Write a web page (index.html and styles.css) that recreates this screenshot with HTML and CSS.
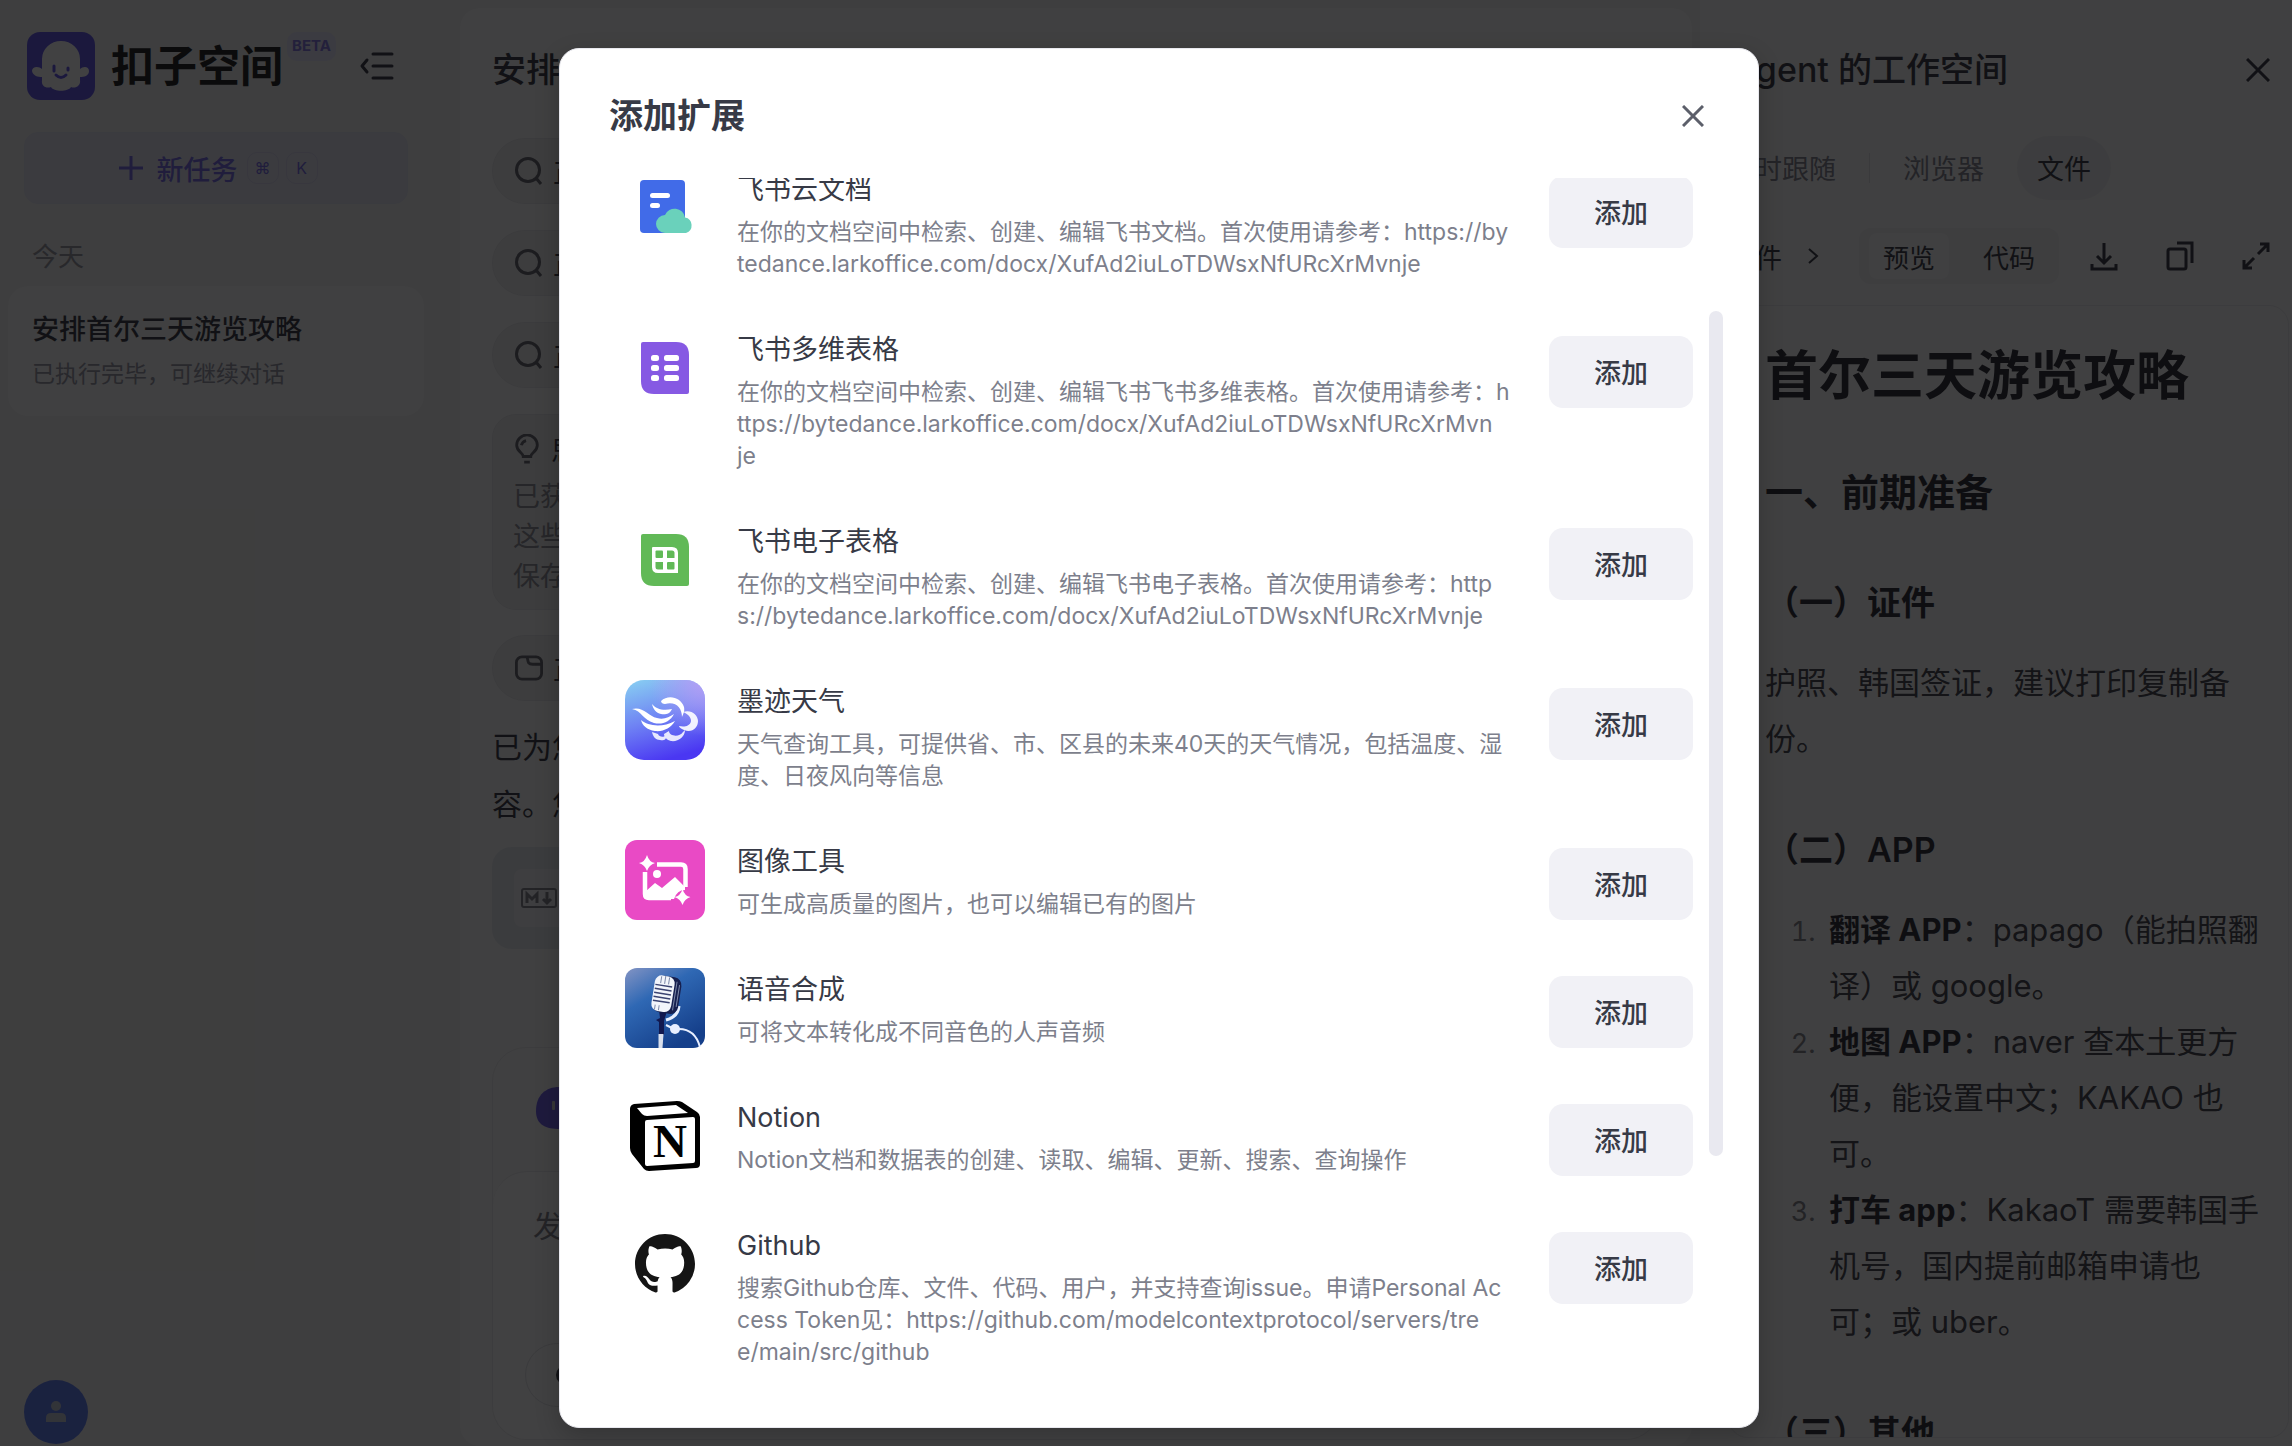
FILE: index.html
```html
<!DOCTYPE html>
<html lang="zh-CN">
<head>
<meta charset="utf-8">
<title>扣子空间</title>
<link rel="stylesheet" href="styles.css">
</head>
<body>
<div class="app">
  <aside class="sidebar">
    <div class="brand">
      <svg class="brand-logo" viewBox="0 0 68 68" aria-hidden="true"><rect width="68" height="68" rx="13" fill="#4d41e6"/><path fill="#fff" d="M15 27a19 18 0 0 1 38 0v10c3-3 9-3 9 2 0 5-5 6-9 6v3c1 6-5 9-9 7-3 5-17 5-20 0-5 2-10-1-9-7v-3c-4 0-9-1-10-6 0-5 7-5 10-2z"/><path d="M27 34v5M41 36v2M29 43q5 5 10 0" fill="none" stroke="#4d41e6" stroke-width="3" stroke-linecap="round"/></svg>
      <strong class="brand-name">扣子空间</strong>
      <span class="beta">BETA</span>
      <button class="icon-button collapse" aria-label="收起"><svg width="34" height="28" viewBox="0 0 34 28"><path d="M13 2h19M13 14h19M13 26h19M7 8l-5 6 5 6" fill="none" stroke="currentColor" stroke-width="3" stroke-linecap="round" stroke-linejoin="round"/></svg></button>
    </div>
    <button class="new-task"><svg width="26" height="26" viewBox="0 0 26 26"><path d="M13 1v24M1 13h24" stroke="currentColor" stroke-width="3"/></svg><span>新任务</span><kbd>⌘</kbd><kbd>K</kbd></button>
    <h2 class="group-label">今天</h2>
    <a class="task" href="#task"><span class="task-title">安排首尔三天游览攻略</span><span class="task-state">已执行完毕，可继续对话</span></a>
    <button class="avatar" aria-label="账户"><svg width="20" height="22" viewBox="0 0 20 22"><circle cx="10" cy="5" r="5" fill="#b9bfd0"/><path d="M0 21v-4q0-5 5-5h10q5 0 5 5v4z" fill="#b9bfd0"/></svg></button>
  </aside>

  <main class="chat">
    <h1 class="chat-title">安排首尔三天游览攻略</h1>
    <div class="step"><svg class="step-icon" viewBox="0 0 28 28"><circle cx="13" cy="13" r="11.500"/><path d="M21 21l5 6"/></svg>正在搜索</div>
    <div class="step"><svg class="step-icon" viewBox="0 0 28 28"><circle cx="13" cy="13" r="11.500"/><path d="M21 21l5 6"/></svg>正在搜索</div>
    <div class="step"><svg class="step-icon" viewBox="0 0 28 28"><circle cx="13" cy="13" r="11.500"/><path d="M21 21l5 6"/></svg>正在搜索</div>
    <section class="thought">
      <div class="thought-head"><svg class="step-icon" viewBox="0 0 28 32"><path d="M10 24c0-4-7-5-7-12a11 11 0 0 1 22 0c0 7-7 8-7 12zM11 30h6M8 12q1-4 5-5"/></svg>思考</div>
      <p>已获取攻略<br>这些信息<br>保存文件</p>
    </section>
    <div class="step"><svg class="step-icon" viewBox="0 0 30 28"><rect x="1.500" y="2" width="27" height="24" rx="6"/><path d="M13 2c1 6 1 8 6 8h9"/></svg>正在保存</div>
    <p class="answer">已为您整理内<br>容。您可查看</p>
    <div class="file-card"><div class="file-tile"><svg width="36" height="20" viewBox="0 0 36 20" fill="none" stroke="currentColor" stroke-width="2"><rect x="1" y="1" width="34" height="18" rx="2"/><path stroke-width="3" d="M6 15V6l5 5 5-5v9M26 4v10M22 11l4 4 4-4"/></svg></div></div>
    <section class="composer">
      <div class="composer-head"><svg width="48" height="42" viewBox="0 0 48 42"><path d="M0 24C0 8 10 0 23 0s25 8 25 22-10 20-24 20S0 38 0 24z" fill="#5a46e8"/><rect x="16" y="14" width="3" height="9" rx="1" fill="#ccc"/></svg></div>
      <div class="composer-body">
        <textarea aria-label="消息" placeholder="发送消息"></textarea>
        <button class="round-button" aria-label="扩展"><svg width="20" height="20" viewBox="0 0 20 20"><circle cx="10" cy="10" r="8" fill="none" stroke="currentColor" stroke-width="4"/></svg></button>
      </div>
    </section>
  </main>

  <section class="workspace">
    <header class="workspace-head"><h2>Agent 的工作空间</h2><button class="icon-button" aria-label="关闭"><svg width="24" height="24" viewBox="0 0 24 24"><path d="M1 1l22 22M23 1L1 23" stroke="currentColor" stroke-width="3"/></svg></button></header>
    <nav class="tabs"><button>实时跟随</button><i></i><button>浏览器</button><button class="active">文件</button></nav>
    <div class="toolbar">
      <span class="crumb">文件</span>
      <svg class="chevron" width="12" height="18" viewBox="0 0 12 18"><path d="M2 2l8 7-8 7" fill="none" stroke="currentColor" stroke-width="2"/></svg>
      <div class="segment"><button class="active">预览</button><button>代码</button></div>
      <div class="tools">
        <button class="icon-button" aria-label="下载"><svg width="28" height="30" viewBox="0 0 28 30"><path d="M14 2v20M7 15l7 7 7-7M2 23v5h24v-5"/></svg></button>
        <button class="icon-button" aria-label="复制"><svg width="28" height="30" viewBox="0 0 28 30"><rect x="2" y="8" width="18" height="20" rx="2"/><path d="M11 2h15v20"/></svg></button>
        <button class="icon-button" aria-label="展开"><svg width="28" height="30" viewBox="0 0 28 30"><path d="M16 13L26 3M18 3h8v8M12 17L2 27M2 19v8h8"/></svg></button>
      </div>
    </div>
    <article class="doc">
      <h1>首尔三天游览攻略</h1>
      <h2>一、前期准备</h2>
      <h3>（一）证件</h3>
      <p>护照、韩国签证，建议打印复制备份。</p>
      <h3>（二）APP</h3>
      <ol>
        <li><strong>翻译 APP</strong>：papago（能拍照翻译）或 google。</li>
        <li><strong>地图 APP</strong>：naver 查本土更方便，能设置中文；KAKAO 也可。</li>
        <li><strong>打车 app</strong>：KakaoT 需要韩国手机号，国内提前邮箱申请也可；或 uber。</li>
      </ol>
      <h3>（三）其他</h3>
    </article>
  </section>
</div>

<div class="overlay">
  <section class="modal" role="dialog" aria-modal="true" aria-labelledby="modal-title">
    <header class="modal-head"><h2 id="modal-title">添加扩展</h2><button class="icon-button" aria-label="关闭"><svg width="22" height="22" viewBox="0 0 22 22"><path d="M1 1l20 20M21 1L1 21" stroke="currentColor" stroke-width="3"/></svg></button></header>
    <div class="modal-scroll">
      <ul class="extensions">
        <li>
          <svg class="ext-icon" viewBox="0 0 80 80"><rect x="15" y="12" width="45" height="53" rx="4" fill="#416be8"/><rect x="25" y="25" width="20" height="5" rx="2.500" fill="#fff"/><rect x="25" y="35" width="10" height="5" rx="2.500" fill="#fff"/><path d="M40 65a9 9 0 0 1 0-18 10.500 10.500 0 0 1 20 2.500 8 8 0 0 1 1 15.500z" fill="#6ad1bb"/></svg>
          <div class="ext-text"><h3>飞书云文档</h3><p>在你的文档空间中检索、创建、编辑飞书文档。首次使用请参考：https://by<br>tedance.larkoffice.com/docx/XufAd2iuLoTDWsxNfURcXrMvnje</p></div>
          <button class="add">添加</button>
        </li>
        <li>
          <svg class="ext-icon" viewBox="0 0 80 80"><path d="M18 14h33q13 0 13 13v37q0 2-2 2H29q-13 0-13-13V16q0-2 2-2z" fill="#8659e3"/><g fill="#fff"><rect x="26" y="27" width="8" height="6" rx="2.500"/><rect x="39" y="27" width="15" height="6" rx="2.500"/><rect x="26" y="37" width="8" height="6" rx="2.500"/><rect x="39" y="37" width="15" height="6" rx="2.500"/><rect x="26" y="47" width="8" height="6" rx="2.500"/><rect x="39" y="47" width="15" height="6" rx="2.500"/></g></svg>
          <div class="ext-text"><h3>飞书多维表格</h3><p>在你的文档空间中检索、创建、编辑飞书飞书多维表格。首次使用请参考：h<br>ttps://bytedance.larkoffice.com/docx/XufAd2iuLoTDWsxNfURcXrMvn<br>je</p></div>
          <button class="add">添加</button>
        </li>
        <li>
          <svg class="ext-icon" viewBox="0 0 80 80"><path d="M18 14h33q13 0 13 13v37q0 2-2 2H29q-13 0-13-13V16q0-2 2-2z" fill="#61b957"/><path d="M28 27h19q6 0 6 6v20H33q-6 0-6-6V28q0-1 1-1z" fill="#fff"/><g fill="#61b957"><rect x="30.500" y="30.500" width="7.500" height="7.500" rx="1"/><path d="M42 30.500h5q2.500 0 2.500 2.500v5H42z"/><path d="M30.500 42H38v7.500h-5q-2.500 0-2.500-2.500z"/><rect x="42" y="42" width="7.500" height="7.500" rx="1"/></g></svg>
          <div class="ext-text"><h3>飞书电子表格</h3><p>在你的文档空间中检索、创建、编辑飞书电子表格。首次使用请参考：http<br>s://bytedance.larkoffice.com/docx/XufAd2iuLoTDWsxNfURcXrMvnje</p></div>
          <button class="add">添加</button>
        </li>
        <li>
          <svg class="ext-icon" viewBox="0 0 80 80"><defs><linearGradient id="sky" x1=".2" y1="0" x2=".5" y2="1"><stop offset="0" stop-color="#86c9f2"/><stop offset=".5" stop-color="#6f83f4"/><stop offset="1" stop-color="#4a37f2"/></linearGradient><radialGradient id="haze" cx="1" cy="0" r=".7"><stop offset="0" stop-color="#b69df5"/><stop offset="1" stop-color="#b69df5" stop-opacity="0"/></radialGradient></defs><rect width="80" height="80" rx="19" fill="url(#sky)"/><rect width="80" height="80" rx="19" fill="url(#haze)"/><g fill="#fff"><path d="M7 29c11-3 16 7 25 9 7 2 12-1 17-4-4 8-12 11-20 9C18 40 17 31 7 29z"/><path d="M27 24c4 5 11 7 20 5-2 5-7 6-11 5-5-1-8-5-9-10zM16 40c7 6 21 8 34 1-4 7-12 11-20 10-8-1-13-6-14-11z"/><path d="M36 21c7-7 20-4 23 6 1 5-1 7-2 10 0-9-6-16-17-13-2 0-4-1-4-3z"/><path d="M58 32c8-3 15 3 15 9 0 7-6 12-14 9-3-1-5-3-5-4 4 1 11 1 12-5 0-4-3-7-8-9z" opacity=".9"/><path d="M60 50c0 7-7 12-14 11-4-1-7-4-7-7l5-3c0 5 10 7 14 1zM27 52l6 2c1 3 6 4 8 1 1 5-3 6-6 5-4 0-7-3-8-8z" opacity=".85"/></g></svg>
          <div class="ext-text"><h3>墨迹天气</h3><p>天气查询工具，可提供省、市、区县的未来40天的天气情况，包括温度、湿度、日夜风向等信息</p></div>
          <button class="add">添加</button>
        </li>
        <li>
          <svg class="ext-icon" viewBox="0 0 80 80"><rect width="80" height="80" rx="12" fill="#e94ac5"/><path d="M32 24.500h24q4.500 0 4.500 4.500v18M20 32v22q0 4 4 4h22" fill="none" stroke="#fff" stroke-width="4.500"/><path d="M20 52l10-9 7 5 13-11 10 10v3q-8 0-11 9H24q-4 0-4-4z" fill="#fff"/><circle cx="32" cy="34" r="4" fill="#fff"/><path d="M22 15q2 7 8 8-6 2-8 8-2-6-8-8 6-1 8-8zM57.500 49q2 7 8 8-6 2-8 8-2-6-8-8 6-1 8-8z" fill="#fff"/></svg>
          <div class="ext-text"><h3>图像工具</h3><p>可生成高质量的图片，也可以编辑已有的图片</p></div>
          <button class="add">添加</button>
        </li>
        <li>
          <svg class="ext-icon" viewBox="0 0 80 80"><defs><linearGradient id="studio" x1="0" y1="0" x2=".6" y2="1"><stop offset="0" stop-color="#8394c4"/><stop offset=".4" stop-color="#2f68b4"/><stop offset="1" stop-color="#153f8a"/></linearGradient></defs><rect width="80" height="80" rx="12" fill="url(#studio)"/><path d="M54 38q-1 11-13 14" fill="none" stroke="#e7efff" stroke-width="3"/><path d="M34 42l8 1-3 10v14h-5V54l-3-2 4-2z" fill="#11184f"/><path d="M33.500 66h5l-1 14h-4z" fill="#d9dfec"/><g transform="rotate(9 40 26)"><rect x="29" y="8" width="26" height="37" rx="8" fill="#17204f"/><rect x="28" y="8" width="20" height="36" rx="7" fill="#f2f5fb"/><path d="M29 18h17M29 22h17M29 26h17M29 30h17M29 34h17" stroke="#3a4371" stroke-width="1.500"/><path d="M34 9v7M38 8v8M42 9v7M32 38v5M36 38v5M50 12v29M53 15v22" stroke="#7d89a8" stroke-width="1"/></g><circle cx="50" cy="61" r="5" fill="#e8efff"/><path d="M41 57l8 4M54 61q16 0 21 18" fill="none" stroke="#e8efff" stroke-width="2"/></svg>
          <div class="ext-text"><h3>语音合成</h3><p>可将文本转化成不同音色的人声音频</p></div>
          <button class="add">添加</button>
        </li>
        <li>
          <svg class="ext-icon" viewBox="0 0 80 80"><path d="M9 8l43-3q3 0 5 1l15 10q3 2 3 5v47q0 4-4 4l-47 3q-3 0-5-2L7 58q-2-3-2-6V13q0-4 4-5z" fill="#000"/><path d="M12 12l39-3 12 8-41 3q-3 0-5-2z" fill="#fff"/><path d="M22 24l46-3q2 0 2 2v42q0 2-2 2l-46 3q-2 0-2-2V26q0-2 2-2z" fill="#fff"/><text x="45" y="61" text-anchor="middle" class="notion-letter">N</text></svg>
          <div class="ext-text"><h3>Notion</h3><p>Notion文档和数据表的创建、读取、编辑、更新、搜索、查询操作</p></div>
          <button class="add">添加</button>
        </li>
        <li>
          <svg class="ext-icon" viewBox="0 0 80 80"><path transform="translate(10 10) scale(3.750)" fill="#151515" d="M8 0C3.580 0 0 3.580 0 8c0 3.540 2.290 6.530 5.470 7.590.4.070.55-.17.55-.38 0-.19-.01-.82-.01-1.490-2.010.37-2.530-.49-2.690-.94-.09-.23-.48-.94-.82-1.130-.28-.15-.68-.52-.01-.53.63-.01 1.080.58 1.230.82.72 1.210 1.870.87 2.330.66.070-.52.28-.87.51-1.070-1.780-.2-3.640-.89-3.640-3.950 0-.87.31-1.590.82-2.150-.08-.2-.36-1.020.08-2.120 0 0 .67-.21 2.200.82.64-.18 1.320-.27 2-.27s1.360.09 2 .27c1.530-1.040 2.200-.82 2.200-.82.44 1.100.16 1.920.08 2.120.51.56.82 1.270.82 2.150 0 3.070-1.870 3.750-3.650 3.950.29.25.54.73.54 1.480 0 1.070-.01 1.930-.01 2.200 0 .21.15.46.55.38A8.010 8.010 0 0 0 16 8c0-4.420-3.580-8-8-8z"/></svg>
          <div class="ext-text"><h3>Github</h3><p>搜索Github仓库、文件、代码、用户，并支持查询issue。申请Personal Ac<br>cess Token见：https://github.com/modelcontextprotocol/servers/tre<br>e/main/src/github</p></div>
          <button class="add">添加</button>
        </li>
      </ul>
    </div>
    <div class="scroll-thumb"></div>
  </section>
</div>
</body>
</html>
```
FILE: styles.css
```css
@counter-style steps { system: extends decimal; suffix: ".\2002"; }

* { box-sizing: border-box; }

body, h1, h2, h3, p, ul, ol { margin: 0; padding: 0; }

body {
  height: 100vh;
  overflow: hidden;
  font-family: Inter, "Noto Sans CJK SC", sans-serif;
  font-size: 27px;
  color: #1c1f2a;
  text-spacing-trim: space-all;
}

button, textarea { font: inherit; color: inherit; border: 0; background: none; padding: 0; }
button { cursor: pointer; }
ul { list-style: none; }
svg { display: block; flex: none; }
.icon-button { display: flex; }

.app { display: flex; height: 100vh; background: #efefef; }

/* Sidebar */
.sidebar { width: 460px; flex: none; display: flex; flex-direction: column; padding: 32px 36px 2px 8px; }
.brand { display: flex; height: 68px; margin-left: 19px; align-items: center; }
.brand-logo { width: 68px; height: 68px; }
.brand-name { margin-left: 16px; font-size: 43px; line-height: 68px; font-weight: 700; color: #000; }
.beta { align-self: flex-start; height: 29px; margin-left: 4px; padding: 0 5px; border-radius: 10px; background: #e2e1fa; color: #7266dc; font-size: 15px; line-height: 28px; font-weight: 700; }
.collapse { margin-left: 24px; }
.new-task { display: flex; align-items: center; justify-content: center; height: 72px; margin: 32px 16px 0; padding-left: 10px; border: 1px solid #dfe0ee; border-radius: 14px; background: #e2e4f0; color: #6256e4; font-weight: 500; }
.new-task span { margin: 0 9px 0 13px; }
.new-task kbd { width: 32px; height: 32px; margin-right: 7px; border: 1px solid #d2d0ea; border-radius: 10px; font: 16px/30px Inter, "DejaVu Sans", sans-serif; }
.group-label { margin: 33px 24px 0; font-size: 26px; line-height: 40px; font-weight: 400; color: #8a8a94; }
.task { display: flex; flex-direction: column; height: 130px; margin-top: 9px; padding: 24px; border-radius: 20px; background: #f8f8f8; color: inherit; text-decoration: none; }
.task-title { line-height: 40px; font-weight: 500; white-space: nowrap; }
.task-state { margin-top: 8px; font-size: 23px; line-height: 32px; color: #8a8a98; }
.avatar { display: flex; align-items: center; justify-content: center; width: 64px; height: 64px; margin: auto 0 0 16px; border-radius: 50%; background: #4a6cf0; }

/* Conversation */
.chat { flex: 1; min-width: 0; display: flex; flex-direction: column; align-items: flex-start; margin: 8px 8px 0 0; padding: 36px 32px 6px; border-radius: 20px; background: #f9f9f9; }
.chat-title { margin-bottom: 42px; font-size: 34px; line-height: 52px; font-weight: 500; }
.step { display: flex; align-items: center; gap: 10px; height: 66px; margin-bottom: 26px; padding: 0 22px; border: 1px solid #e4e4e6; border-radius: 33px; background: #ececec; }
.step-icon { width: 28px; height: 30px; fill: none; stroke: #50505a; stroke-width: 3; }
.thought { align-self: stretch; height: 196px; margin-bottom: 25px; padding: 14px 20px; border: 1px solid #e4e4e6; border-radius: 24px; background: #ececec; color: #7e7e88; }
.thought-head { display: flex; align-items: center; gap: 10px; height: 40px; margin-bottom: 8px; color: #1c1f2a; }
.thought p { line-height: 40px; }
.answer { font-size: 30px; line-height: 57px; margin: -8px 0 14px; }
.file-card { align-self: stretch; height: 102px; padding: 22px; border-radius: 20px; background: #e2e6ec; }
.file-tile { display: flex; align-items: center; width: 58px; height: 58px; padding-left: 7px; border-radius: 8px; background: #f2f2f4; color: #70707a; }
.composer { align-self: stretch; flex: 1; display: flex; flex-direction: column; margin-top: 98px; border: 1px solid #e8e8ea; border-radius: 34px; }
.composer-head { height: 123px; padding: 39px 43px; }
.composer-body { flex: 1; display: flex; flex-direction: column; justify-content: space-between; align-items: flex-start; padding: 28px 32px 32px; border-top: 1px solid #e8e8ea; border-radius: 34px; background: #fdfdfd; }
.composer textarea { width: 100%; height: 52px; padding: 0 8px; font-size: 30px; line-height: 52px; resize: none; overflow: hidden; }
.composer textarea::placeholder { color: #73737d; opacity: 1; }
.round-button { display: flex; align-items: center; width: 120px; height: 64px; padding-left: 30px; border: 1px solid #e0e0e4; border-radius: 32px; }

/* Workspace */
.workspace { flex: none; width: 592px; display: flex; flex-direction: column; padding: 44px 3px 8px 28px; background: #f9f9f9; }
.workspace-head { display: flex; justify-content: space-between; align-items: center; margin: 0 19px 0 4px; }
.workspace-head h2 { font-size: 34px; line-height: 52px; font-weight: 500; }
.tabs { display: flex; align-items: center; gap: 13px; margin-top: 40px; margin-left: -20px; color: #74747f; }
.tabs button { height: 64px; padding: 0 20px 2px; border-radius: 32px; }
.tabs i { width: 1px; height: 30px; background: #dcdce0; }
.tabs .active { color: #1c1f2a; background: #ececee; }
.toolbar { display: flex; align-items: center; height: 56px; margin: 28px 19px 21px 0; }
.chevron { margin: 0 40px 0 25px; }
.segment { display: flex; align-items: center; height: 56px; padding: 0 10px; gap: 20px; border-radius: 12px; background: #efeff1; }
.segment button { width: 80px; height: 46px; border-radius: 8px; font-size: 26px; white-space: nowrap; }
.segment .active { background: #f9f9fa; }
.tools { display: flex; flex: 1; justify-content: space-between; margin-left: 31px; }
.tools svg { fill: none; stroke: currentColor; stroke-width: 3; }
.doc { flex: 1; min-height: 0; overflow: hidden; padding: 30px 26px 0 36px; border: 1px solid #e6e6ea; border-radius: 20px; background: #fafafa; color: #2c2c34; font-size: 31px; line-height: 56px; }
.doc h1 { font-size: 53px; line-height: 80px; font-weight: 700; color: #12121a; white-space: nowrap; }
.doc h2 { margin-top: 48px; font-size: 38px; line-height: 56px; font-weight: 700; color: #12121a; }
.doc h3 { margin: 55px 0 24px; font-size: 34px; line-height: 56px; font-weight: 600; color: #12121a; }
.doc ol { padding-left: 64px; list-style: steps; }
.doc li::marker { color: #707078; font-size: 27px; }
.doc strong { font-weight: 700; color: #12121a; }

/* Dialog */
.overlay { position: absolute; inset: 0; display: flex; justify-content: center; padding: 48px 0 18px 26px; background: rgba(14, 14, 15, .79); }
.modal { position: relative; display: flex; flex-direction: column; width: 1200px; border: 1px solid #e8e8ee; border-radius: 20px; background: #fff; box-shadow: 0 8px 24px rgba(0, 0, 0, .2); }
.modal-head { display: flex; justify-content: space-between; align-items: center; height: 129px; padding: 4px 54px 0 49px; color: #5c5f6a; }
.modal-head h2 { font-size: 34px; line-height: 52px; font-weight: 600; color: #373a46; }
.modal-scroll { flex: 1; min-height: 0; overflow: hidden; padding: 0 65px; }
.extensions { margin-top: -10px; }
.extensions li { display: flex; align-items: flex-start; padding-bottom: 48px; }
.ext-icon { width: 80px; height: 80px; }
.ext-text { flex: 1; min-width: 0; margin: 0 36px 0 32px; }
.ext-text h3 { margin-bottom: 4px; font-size: 27px; line-height: 44px; font-weight: 400; color: #373a46; }
.ext-text p { font-size: 23px; line-height: 32px; color: #7d7f8c; word-break: break-all; }
.add { width: 144px; height: 72px; margin-top: 8px; padding-bottom: 2px; border-radius: 14px; background: #f1f1f6; color: #373a46; font-weight: 500; }
.notion-letter { font: 700 47px "Liberation Serif", serif; }
.scroll-thumb { position: absolute; top: 262px; right: 35px; bottom: 271px; width: 14px; border-radius: 7px; background: #e9e9f0; }
```
